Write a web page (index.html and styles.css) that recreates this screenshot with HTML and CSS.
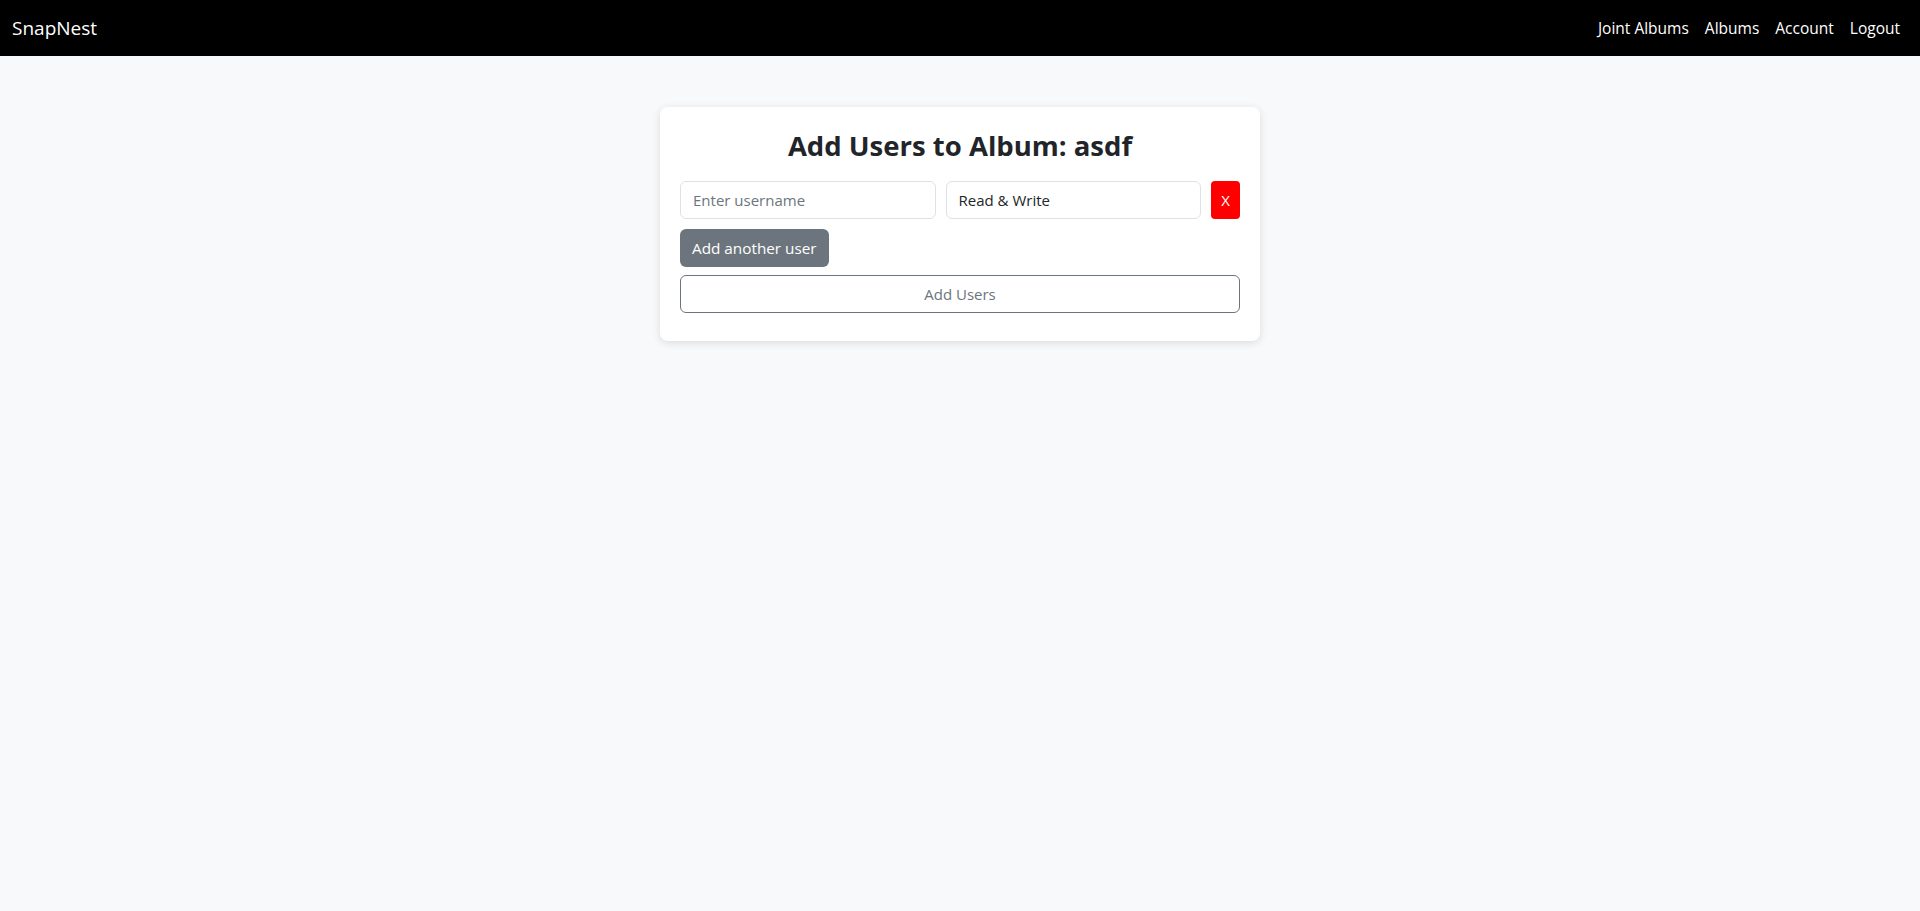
FILE: index.html
```html
<!DOCTYPE html>
<html lang="en">
<head>
<meta charset="utf-8">
<title>SnapNest</title>
<link rel="stylesheet" href="styles.css">
</head>
<body>
<nav class="navbar">
  <a class="brand" href="#">SnapNest</a>
  <ul class="nav-links">
    <li><a href="#">Joint Albums</a></li>
    <li><a href="#">Albums</a></li>
    <li><a href="#">Account</a></li>
    <li><a href="#">Logout</a></li>
  </ul>
</nav>
<main class="main">
  <div class="card">
    <h2 class="title">Add Users to Album: asdf</h2>
    <form class="form">
      <div class="user-row">
        <input class="field" type="text" placeholder="Enter username">
        <select class="field select">
          <option>Read &amp; Write</option>
          <option>Read Only</option>
        </select>
        <button type="button" class="btn-remove">X</button>
      </div>
      <div class="add-row">
        <button type="button" class="btn-secondary">Add another user</button>
      </div>
      <button type="submit" class="btn-outline">Add Users</button>
    </form>
  </div>
</main>
</body>
</html>
```

FILE: styles.css
```css
* { box-sizing: border-box; }
html, body {
  margin: 0;
  padding: 0;
}
body {
  background: #f8f9fa;
  font-family: "Open Sans", "Noto Sans", sans-serif;
  font-size: 16px;
  color: #212529;
  min-height: 911px;
}
.navbar {
  background: #000;
  height: 56px;
  display: flex;
  align-items: center;
  justify-content: space-between;
  padding: 0 12px;
}
.brand {
  color: #fff;
  text-decoration: none;
  font-size: 19px;
}
.nav-links {
  list-style: none;
  margin: 0;
  padding: 0;
  display: flex;
}
.nav-links a {
  display: block;
  color: #fff;
  text-decoration: none;
  padding: 8px;
  font-size: 15.5px;
}
.main {
  display: flex;
  justify-content: center;
  padding-top: 51px;
}
.card {
  width: 600px;
  background: #fff;
  border-radius: 8px;
  box-shadow: 0 2px 8px rgba(0, 0, 0, 0.12);
  padding: 20px 20px 28px;
}
.title {
  margin: 0 0 16px;
  text-align: center;
  font-size: 27.5px;
  font-weight: 700;
  line-height: 38px;
  color: #212529;
}
.form {
  display: flex;
  flex-direction: column;
}
.user-row {
  display: flex;
  gap: 10px;
  height: 38px;
}
.field {
  flex: 1;
  min-width: 0;
  height: 38px;
  border: 1px solid #dee2e6;
  border-radius: 6px;
  padding: 0 12px;
  font-family: inherit;
  font-size: 15px;
  color: #212529;
  background: #fff;
  outline: none;
}
.field::placeholder { color: #6c757d; }
.select {
  appearance: none;
  -webkit-appearance: none;
}
.btn-remove {
  width: 29px;
  height: 38px;
  border: none;
  border-radius: 4px;
  background: #ff0000;
  color: #fff;
  font-family: inherit;
  font-size: 15px;
  padding: 0;
}
.add-row {
  display: flex;
  margin-top: 10px;
}
.btn-secondary {
  height: 38px;
  background: #6c757d;
  color: #fff;
  border: none;
  border-radius: 6px;
  padding: 0 12px;
  font-family: inherit;
  font-size: 15.3px;
}
.btn-outline {
  margin-top: 8px;
  height: 38px;
  background: #fff;
  color: #6c757d;
  border: 1px solid #6c757d;
  border-radius: 6px;
  font-family: inherit;
  font-size: 15px;
}
```
